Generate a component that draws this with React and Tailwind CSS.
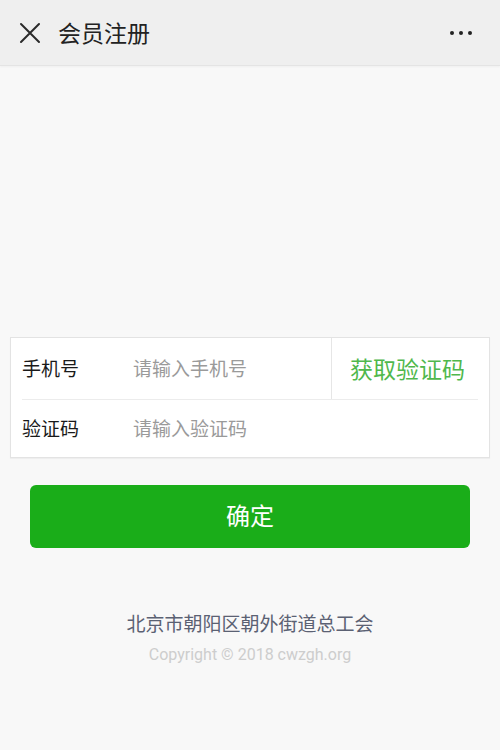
import React from "react";

const font = { fontFamily: '"Noto Sans CJK SC", "Noto Sans", sans-serif' };

function Header() {
  return (
    <div className="h-[66px] bg-[#efefef] border-b border-[#e4e4e4] flex items-center pl-[19px] pr-[28px] shadow-[0_1px_2px_rgba(0,0,0,0.04)]">
      <svg width="22" height="22" viewBox="0 0 22 22" className="shrink-0">
        <path d="M2 2 L20 20 M20 2 L2 20" stroke="#2a2a2a" strokeWidth="2" strokeLinecap="round" />
      </svg>
      <div className="ml-[17px] text-[23px] text-[#222] leading-none">会员注册</div>
      <div className="ml-auto flex gap-[5px]">
        <span className="w-[4px] h-[4px] rounded-full bg-[#222]" />
        <span className="w-[4px] h-[4px] rounded-full bg-[#222]" />
        <span className="w-[4px] h-[4px] rounded-full bg-[#222]" />
      </div>
    </div>
  );
}

function RegisterForm() {
  return (
    <div className="mx-[10px] bg-white border border-[#e3e3e3] shadow-[0_1px_1px_rgba(0,0,0,0.04)]">
      <div className="flex h-[62px] mx-[11px] border-b border-[#ececec]">
        <div className="w-[111px] flex items-center text-[19px] text-[#1a1a1a]">手机号</div>
        <div className="flex-1 flex items-center text-[19px] text-[#9a9a9a]">请输入手机号</div>
        <div className="w-[156px] -mr-[9px] border-l border-[#e6e6e6] flex items-center justify-center pr-[4px] text-[23px] text-[#4fb84c]">
          获取验证码
        </div>
      </div>
      <div className="flex h-[57px] mx-[11px]">
        <div className="w-[111px] flex items-center text-[19px] text-[#1a1a1a]">验证码</div>
        <div className="flex-1 flex items-center text-[19px] text-[#9a9a9a]">请输入验证码</div>
      </div>
    </div>
  );
}

export default function App() {
  return (
    <div className="w-[500px] h-[750px] bg-[#f8f8f8] flex flex-col" style={font}>
      <Header />
      <div className="h-[271px]" />
      <RegisterForm />
      <div className="px-[30px] pt-[27px]">
        <button className="w-full h-[63px] rounded-[6px] bg-[#1aad19] text-white text-[24px] flex items-center justify-center pb-[4px]">
          确定
        </button>
      </div>
      <div className="mt-[61px] text-center text-[19px] text-[#5b6173]">北京市朝阳区朝外街道总工会</div>
      <div className="mt-[5px] text-center text-[16px] text-[#cdcdcd]" style={{ fontFamily: '"Roboto", "Noto Sans", sans-serif' }}>
        Copyright © 2018 cwzgh.org
      </div>
    </div>
  );
}
